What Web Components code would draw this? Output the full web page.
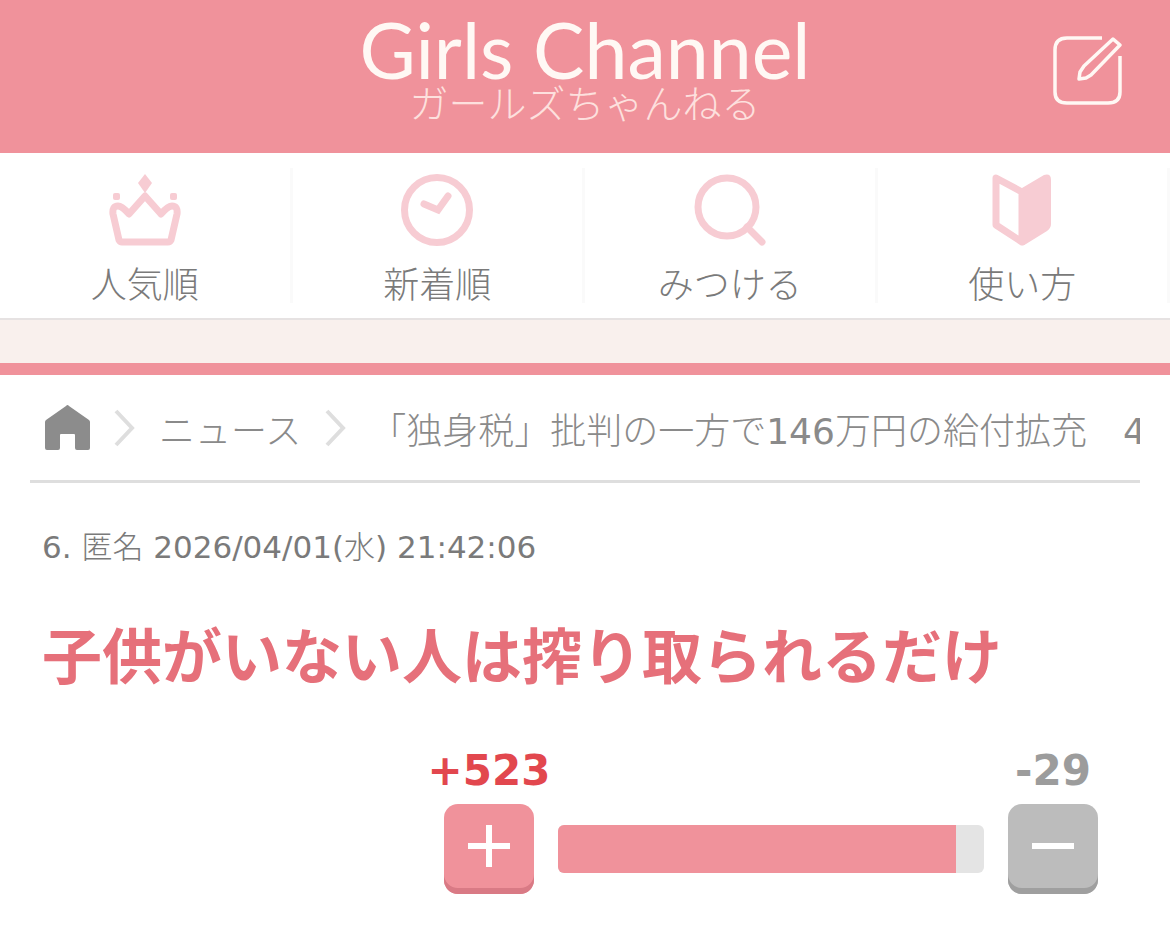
<!DOCTYPE html>
<html lang="ja">
<head>
<meta charset="utf-8">
<meta name="viewport" content="width=device-width, initial-scale=1">
<title>Girls Channel</title>
<style>
  body {
    margin: 0;
    background: #fff;
    color: #7a7a7a;
    font-family: "DejaVu Sans", "Noto Sans CJK JP Light", "Noto Sans CJK JP", sans-serif;
  }
  main {
    border-top: 12px solid #f0929b;
    padding: 0 30px;
  }
  .band {
    height: 43px;
    background: #f9f0ed;
  }
</style>
</head>
<body>
<gc-header>
  <span slot="name">Girls Channel</span>
  <span slot="kana">ガールズちゃんねる</span>
</gc-header>
<gc-nav>
  <gc-nav-item icon="crown">人気順</gc-nav-item>
  <gc-nav-item icon="clock">新着順</gc-nav-item>
  <gc-nav-item icon="search">みつける</gc-nav-item>
  <gc-nav-item icon="book">使い方</gc-nav-item>
</gc-nav>
<div class="band"></div>
<main>
  <gc-breadcrumb category="ニュース">「独身税」批判の一方で146万円の給付拡充　4</gc-breadcrumb>
  <gc-comment>
    <span slot="meta">6. 匿名 2026/04/01(水) 21:42:06</span>
    子供がいない人は搾り取られるだけ
    <gc-vote slot="vote" plus="523" minus="29"></gc-vote>
  </gc-comment>
</main>

<script>
  class GcElement extends HTMLElement {
    constructor() {
      super();
      this.attachShadow({ mode: "open" });
    }

    render() {
      const template = document.createElement("template");
      template.innerHTML = this.getStyles() + this.getTemplate();
      this.shadowRoot.replaceChildren(template.content.cloneNode(true));
    }

    connectedCallback() {
      this.render();
    }
  }

  class GcHeader extends GcElement {
    getStyles() {
      return `
      <style>
        :host {
          display: grid;
          grid-template-columns: 1fr auto 1fr;
          align-items: center;
          box-sizing: border-box;
          height: 153px;
          padding: 0 48px 12px;
          background: #f0929b;
          color: #fff8f4;
        }
        .logo {
          grid-column: 2;
          display: flex;
          flex-direction: column;
          align-items: center;
          color: inherit;
          text-decoration: none;
          white-space: nowrap;
          padding-bottom: 8px;
        }
        .name {
          font: 400 77px/68px Lato, sans-serif;
        }
        .kana {
          font: 300 39px/36px "Noto Sans CJK JP", sans-serif;
          color: #fde0de;
        }
        button {
          justify-self: end;
          padding: 0;
          border: 0;
          background: none;
          color: inherit;
        }
        svg {
          display: block;
        }
      </style>
      `;
    }

    getTemplate() {
      return `
      <a class="logo" href="#">
        <slot class="name" name="name"></slot>
        <slot class="kana" name="kana"></slot>
      </a>
      <button type="button" aria-label="トピックを投稿">
        <svg width="69" height="69" viewBox="0 8 69 69" fill="none" stroke="currentColor" stroke-width="3.5" stroke-linejoin="round">
          <path d="M49 10H14Q2 10 2 22V64Q2 75 14 75H55Q67 75 67 64V28"/>
          <path d="M60 11L67 17L38 47L33 50L26 51L27 44L31 38Z"/>
        </svg>
      </button>
      `;
    }
  }

  class GcNav extends GcElement {
    getStyles() {
      return `
      <style>
        :host {
          display: block;
          border-bottom: 2px solid #e6e2e2;
        }
        nav {
          display: grid;
          grid-template-columns: repeat(4, 1fr);
          padding: 15px 0;
        }
      </style>
      `;
    }

    getTemplate() {
      return `<nav><slot></slot></nav>`;
    }
  }

  const icons = {
    crown: `
      <path d="M13 68H59Q61 68 62 66L68 40Q69 32 63 32Q59 32 52 40L36 22L20 40Q13 32 9 32Q3 32 4 40L10 66Q11 68 13 68Z" fill="none" stroke="currentColor" stroke-width="7" stroke-linejoin="round"/>
      <path d="M36 0L43 9L36 19L29 9Z"/>
      <rect x="4" y="19" width="7" height="7" rx="2"/>
      <rect x="61" y="19" width="7" height="7" rx="2"/>`,
    clock: `
      <circle cx="36" cy="36" r="32.5" fill="none" stroke="currentColor" stroke-width="7"/>
      <path d="M23 30L37 36L47 22" fill="none" stroke="currentColor" stroke-width="7" stroke-linecap="round"/>`,
    search: `
      <circle cx="33" cy="33" r="29" fill="none" stroke="currentColor" stroke-width="7"/>
      <path d="M53 53L68 68" fill="none" stroke="currentColor" stroke-width="7" stroke-linecap="round"/>`,
    book: `
      <path d="M10 4L36 18V68L10 51Z" fill="none" stroke="currentColor" stroke-width="7" stroke-linejoin="round"/>
      <path d="M36 14L58 1Q65 -1 65 6V50Q65 54 61 57L40 70Q37 72 36 71Z"/>`
  };

  class GcNavItem extends GcElement {
    getStyles() {
      return `
      <style>
        :host {
          display: block;
          border-right: 3px solid #fafafa;
        }
        a {
          display: flex;
          flex-direction: column;
          align-items: center;
          gap: 15px;
          padding-top: 6px;
          color: inherit;
          font: 300 36px/42px "Noto Sans CJK JP", sans-serif;
          text-decoration: none;
        }
        svg {
          color: #f7ccd3;
          fill: currentColor;
        }
      </style>
      `;
    }

    getTemplate() {
      return `
      <a href="#">
        <svg width="72" height="72" viewBox="0 0 72 72">${icons[this.getAttribute("icon")]}</svg>
        <slot></slot>
      </a>
      `;
    }
  }

  class GcBreadcrumb extends GcElement {
    getStyles() {
      return `
      <style>
        :host {
          display: block;
          border-bottom: 3px solid #dedede;
          overflow: hidden;
          color: #8a8a8a;
          font-size: 36px;
          line-height: 54px;
          white-space: nowrap;
        }
        nav {
          display: flex;
          align-items: center;
          padding: 30px 0 21px 15px;
        }
        a {
          color: inherit;
          text-decoration: none;
        }
        svg {
          display: block;
          flex: none;
        }
        .arrow {
          margin: 0 24px;
        }
      </style>
      `;
    }

    getTemplate() {
      const arrow = `
        <svg class="arrow" width="21" height="54" viewBox="0 0 21 54" fill="none" stroke="#dedede" stroke-width="4">
          <path d="M2 6L18 23L2 40"/>
        </svg>`;
      return `
      <nav>
        <a href="#" aria-label="ホーム">
          <svg width="45" height="54" viewBox="0 0 45 54" fill="#8c8c8c">
            <path d="M21 1Q22.500 -1 24 1L44 15Q45 16 45 17V43Q45 45 43 45H32Q30 45 30 43V30Q30 29 29 29H16Q15 29 15 30V43Q15 45 13 45H2Q0 45 0 43V17Q0 16 1 15Z"/>
          </svg>
        </a>
        ${arrow}
        <a href="#">${this.getAttribute("category")}</a>
        ${arrow}
        <span><slot></slot></span>
      </nav>
      `;
    }
  }

  class GcComment extends GcElement {
    getStyles() {
      return `
      <style>
        :host {
          display: block;
          padding: 42px 42px 0 12px;
        }
        .meta {
          font-size: 31px;
          line-height: 45px;
        }
        p {
          margin: 38px 0 46px;
          color: #e6707a;
          font: 700 60px/90px "Noto Sans CJK JP", sans-serif;
        }
      </style>
      `;
    }

    getTemplate() {
      return `
      <div class="meta"><slot name="meta"></slot></div>
      <p><slot></slot></p>
      <slot name="vote"></slot>
      `;
    }
  }

  class GcVote extends GcElement {
    getStyles() {
      return `
      <style>
        :host {
          display: flex;
          align-items: flex-end;
          gap: 24px;
          max-width: 654px;
          margin-left: auto;
          font-size: 42px;
          font-weight: 700;
          line-height: 54px;
        }
        .side {
          display: flex;
          flex-direction: column;
          align-items: center;
          gap: 6px;
          width: 90px;
          color: #e2474e;
        }
        .minus {
          color: #9c9c9c;
        }
        button {
          width: 90px;
          height: 90px;
          padding: 0 0 6px;
          border: 0;
          border-radius: 14px;
          background: #f0929b;
          box-shadow: inset 0 -6px #d97a85;
        }
        .minus button {
          background: #bcbcbc;
          box-shadow: inset 0 -6px #9f9f9f;
        }
        svg {
          display: block;
          margin: auto;
        }
        .bar {
          flex: 1;
          height: 48px;
          margin-bottom: 21px;
          border-radius: 6px;
          overflow: hidden;
          background: #e4e4e4;
        }
        .fill {
          height: 100%;
          background: #f0929b;
        }
      </style>
      `;
    }

    getTemplate() {
      const plus = Number(this.getAttribute("plus"));
      const minus = Number(this.getAttribute("minus"));
      const share = plus / (plus + minus);
      return `
      <div class="side">
        <span>+${plus}</span>
        <button type="button" aria-label="プラス">
          <svg width="42" height="42" viewBox="0 0 42 42" stroke="#fff" stroke-width="6"><path d="M0 21H42M21 0V42"/></svg>
        </button>
      </div>
      <div class="bar"><div class="fill" style="width: calc((100% - 6px) * ${share})"></div></div>
      <div class="side minus">
        <span>-${minus}</span>
        <button type="button" aria-label="マイナス">
          <svg width="42" height="42" viewBox="0 0 42 42" stroke="#fff" stroke-width="6"><path d="M0 21H42"/></svg>
        </button>
      </div>
      `;
    }
  }

  customElements.define("gc-header", GcHeader);
  customElements.define("gc-nav", GcNav);
  customElements.define("gc-nav-item", GcNavItem);
  customElements.define("gc-breadcrumb", GcBreadcrumb);
  customElements.define("gc-comment", GcComment);
  customElements.define("gc-vote", GcVote);
</script>
</body>
</html>
